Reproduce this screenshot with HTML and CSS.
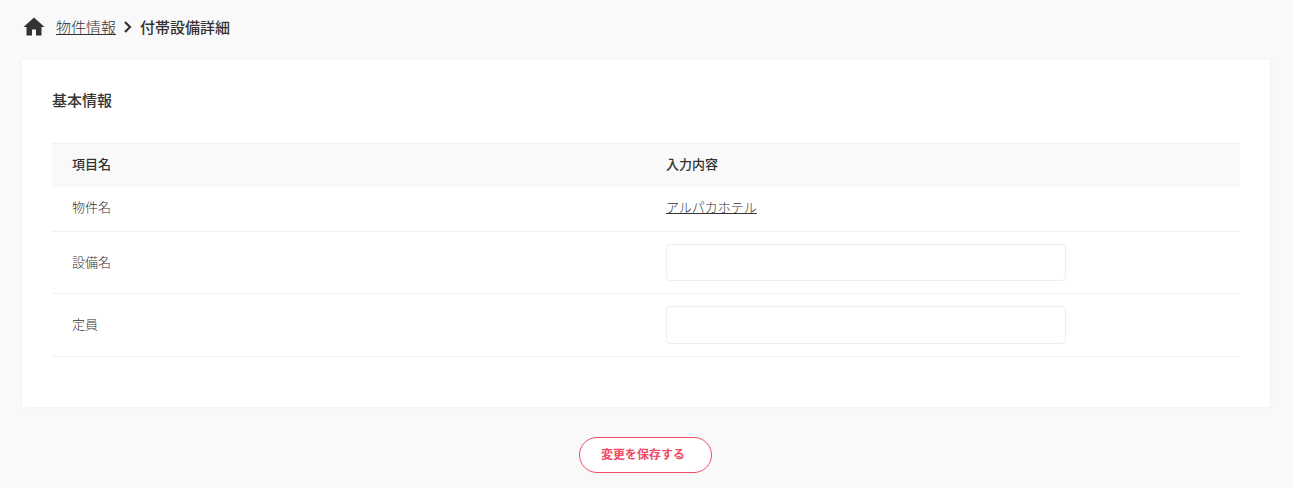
FILE: index.html
```html
<!DOCTYPE html>
<html lang="ja">
<head>
  <meta charset="UTF-8" />
  <title>付帯設備詳細</title>
  <link rel="stylesheet" href="styles.css">
</head>
<body>

<nav class="breadcrumb">
  <svg class="home-icon" viewBox="0 0 24 24" width="24" height="24"><path d="M10 20.500v-6h4v6h5.500v-8.500h3L12 2.500 1.500 12h3v8.500z"/></svg>
  <a href="#" class="crumb-link">物件情報</a>
  <svg class="crumb-arrow" viewBox="0 0 10 14" width="10" height="14"><path d="M2 2l5 5-5 5" fill="none" stroke="#333" stroke-width="2.200"/></svg>
  <span class="crumb-current">付帯設備詳細</span>
</nav>

<section class="card">
  <h2 class="card-title">基本情報</h2>
  <table class="info-table">
    <thead>
      <tr>
        <th class="col-name">項目名</th>
        <th>入力内容</th>
      </tr>
    </thead>
    <tbody>
      <tr class="row-text">
        <td>物件名</td>
        <td><a href="#" class="hotel-link">アルパカホテル</a></td>
      </tr>
      <tr>
        <td>設備名</td>
        <td><input type="text" class="text-input"></td>
      </tr>
      <tr class="row-last">
        <td>定員</td>
        <td><input type="text" class="text-input"></td>
      </tr>
    </tbody>
  </table>
</section>

<div class="actions">
  <button class="save-button">変更を保存する</button>
</div>

</body>
</html>
```

FILE: styles.css
```css
body {
  margin: 0;
  padding: 0;
  background: #f9f9f9;
  font-family: "Noto Sans CJK JP", "Noto Sans", sans-serif;
  font-weight: 300;
  color: #333;
  overflow: hidden;
}

.breadcrumb {
  display: flex;
  align-items: center;
  height: 54px;
  padding: 0 0 1px 22px;
  box-sizing: border-box;
  font-size: 15px;
}

.home-icon {
  fill: #333;
  margin-right: 10px;
}

.crumb-link {
  color: #333;
  text-decoration: underline;
}

.crumb-arrow {
  margin: 0 4px 0 7px;
}

.crumb-current {
  margin-left: 3px;
  font-weight: 500;
}

.card {
  margin: 6px 23px 0 22px;
  height: 347px;
  padding: 29px 30px 30px;
  box-sizing: border-box;
  background: #fff;
  box-shadow: 0 0 6px rgba(0, 0, 0, 0.03);
}

.card-title {
  margin: 0;
  height: 54px;
  font-size: 15px;
  line-height: 21px;
  font-weight: 500;
}

.info-table {
  width: 100%;
  border-collapse: collapse;
  table-layout: fixed;
  font-size: 13px;
  border-top: 1px solid #f0f0f0;
}

.info-table th {
  height: 43px;
  padding: 0 0 3px 20px;
  box-sizing: border-box;
  background: #f9f9f9;
  text-align: left;
  font-weight: 500;
}

.info-table td {
  height: 62px;
  padding: 0 0 2px 20px;
  box-sizing: border-box;
  border-bottom: 1px solid #f0f0f0;
}

.info-table .row-text td {
  height: 45px;
  padding-bottom: 4px;
}

.info-table .row-last td {
  height: 63px;
  padding-bottom: 4px;
}

.col-name {
  width: 594px;
}

.hotel-link {
  color: #333;
  text-decoration: underline;
}

.text-input {
  display: block;
  width: 400px;
  height: 37px;
  margin-top: 2px;
  padding: 0;
  box-sizing: border-box;
  background: #fff;
  border: 1px solid #eee;
  border-radius: 4px;
}

.row-last .text-input {
  height: 38px;
  margin-top: 4px;
}

.actions {
  display: flex;
  justify-content: center;
  padding: 30px 2px 0 0;
}

.save-button {
  width: 133px;
  height: 36px;
  padding: 0 5px 3px 0;
  background: #fff;
  color: #ef4b64;
  border: 1px solid #ef4b64;
  border-radius: 18px;
  font-family: inherit;
  font-size: 12px;
  font-weight: 700;
}
```
